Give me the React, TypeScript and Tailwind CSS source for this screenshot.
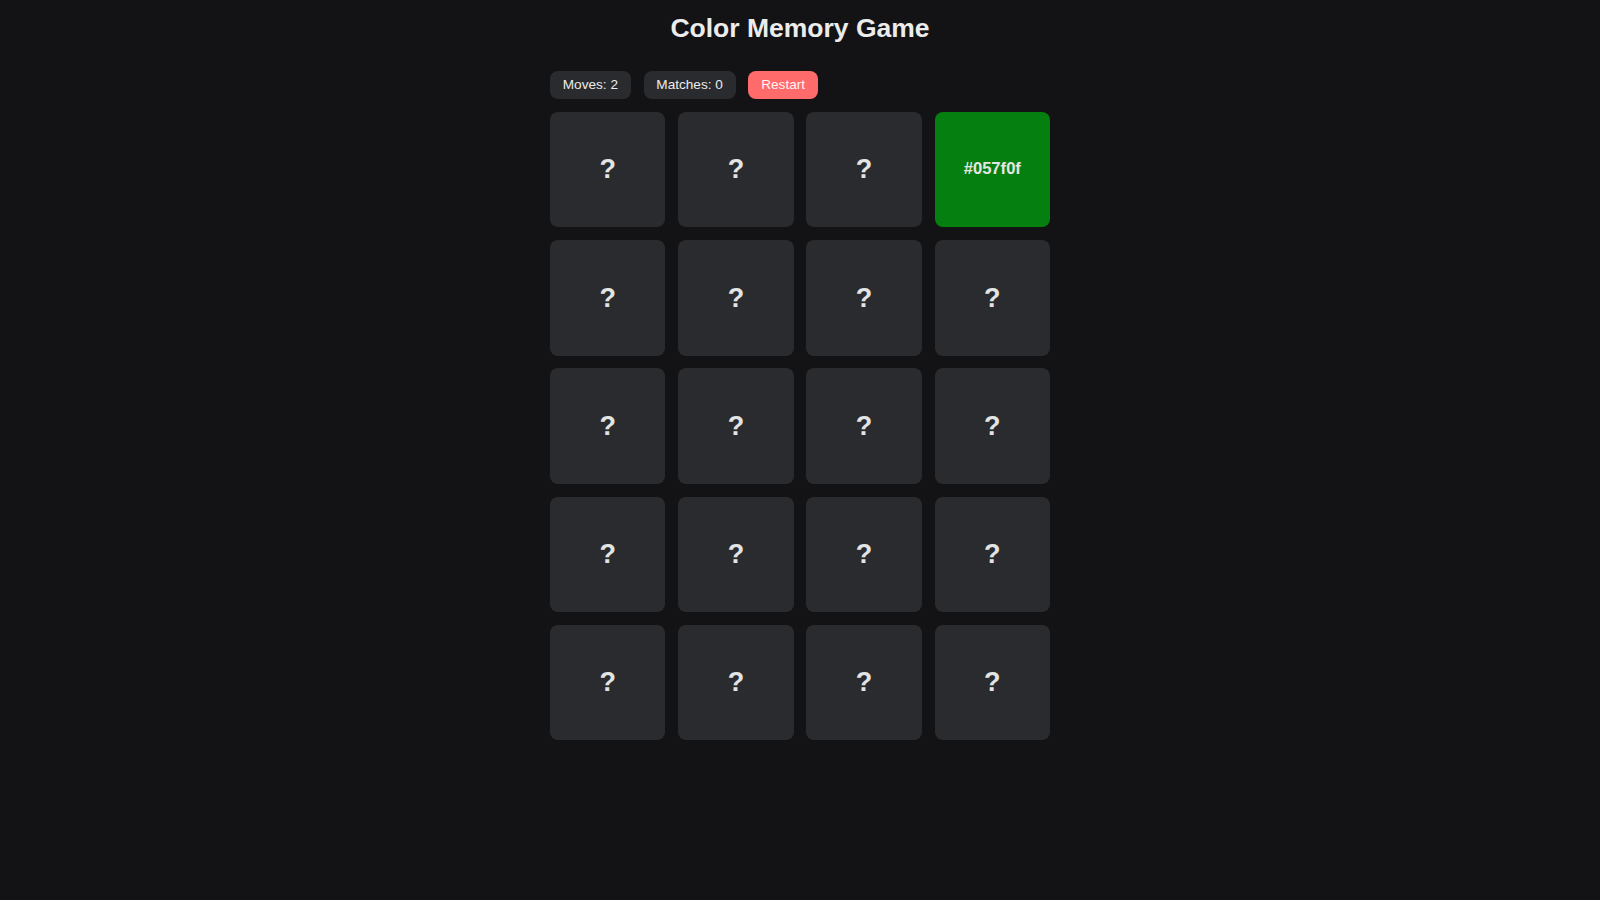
import React, { useState } from 'react';

type Card = { id: number; color: string };

const COLORS = [
  '#057f0f', '#c0392b', '#2980b9', '#8e44ad', '#f39c12',
  '#16a085', '#d35400', '#2c3e50', '#e84393', '#6c5ce7',
];

const initialCards: Card[] = Array.from({ length: 20 }, (_, i) => ({
  id: i,
  color: COLORS[(i * 7 + 3) % 10],
}));
initialCards[3].color = '#057f0f';

const App = () => {
  const [cards] = useState<Card[]>(initialCards);
  const [flipped] = useState<number[]>([3]);
  const [moves] = useState(2);
  const [matches] = useState(0);

  return (
    <div className="min-h-screen bg-[#131315] flex flex-col items-center pt-[13px] text-[#ececec] font-['Liberation_Sans',Arial,sans-serif]">
      <h1 className="text-[26.5px] leading-[30px] font-bold text-[#ececec]">Color Memory Game</h1>

      <div className="w-[500px] mt-[28px] flex gap-[0.8rem]">
        <span className="h-[28px] px-[0.8rem] flex items-center rounded-lg bg-[#2a2b2e] text-[13.6px]">Moves: {moves}</span>
        <span className="h-[28px] px-[0.8rem] flex items-center rounded-lg bg-[#2a2b2e] text-[13.6px]">Matches: {matches}</span>
        <button className="h-[28px] px-[0.8rem] flex items-center rounded-lg bg-[#ff6b6b] text-[13.6px] text-[#fff4f4]">Restart</button>
      </div>

      <div className="w-[500px] mt-[13px] grid grid-cols-4 gap-[0.8rem]">
        {cards.map((card) => {
          const open = flipped.includes(card.id);
          return (
            <div
              key={card.id}
              className={`aspect-square rounded-lg flex items-center justify-center font-bold ${open ? 'text-[16.6px] text-[#e6e6e6]' : 'bg-[#2a2b2e] text-[27px] text-[#e4e4e4]'}`}
              style={open ? { backgroundColor: card.color } : undefined}
            >
              {open ? card.color : '?'}
            </div>
          );
        })}
      </div>
    </div>
  );
};

export default App;
